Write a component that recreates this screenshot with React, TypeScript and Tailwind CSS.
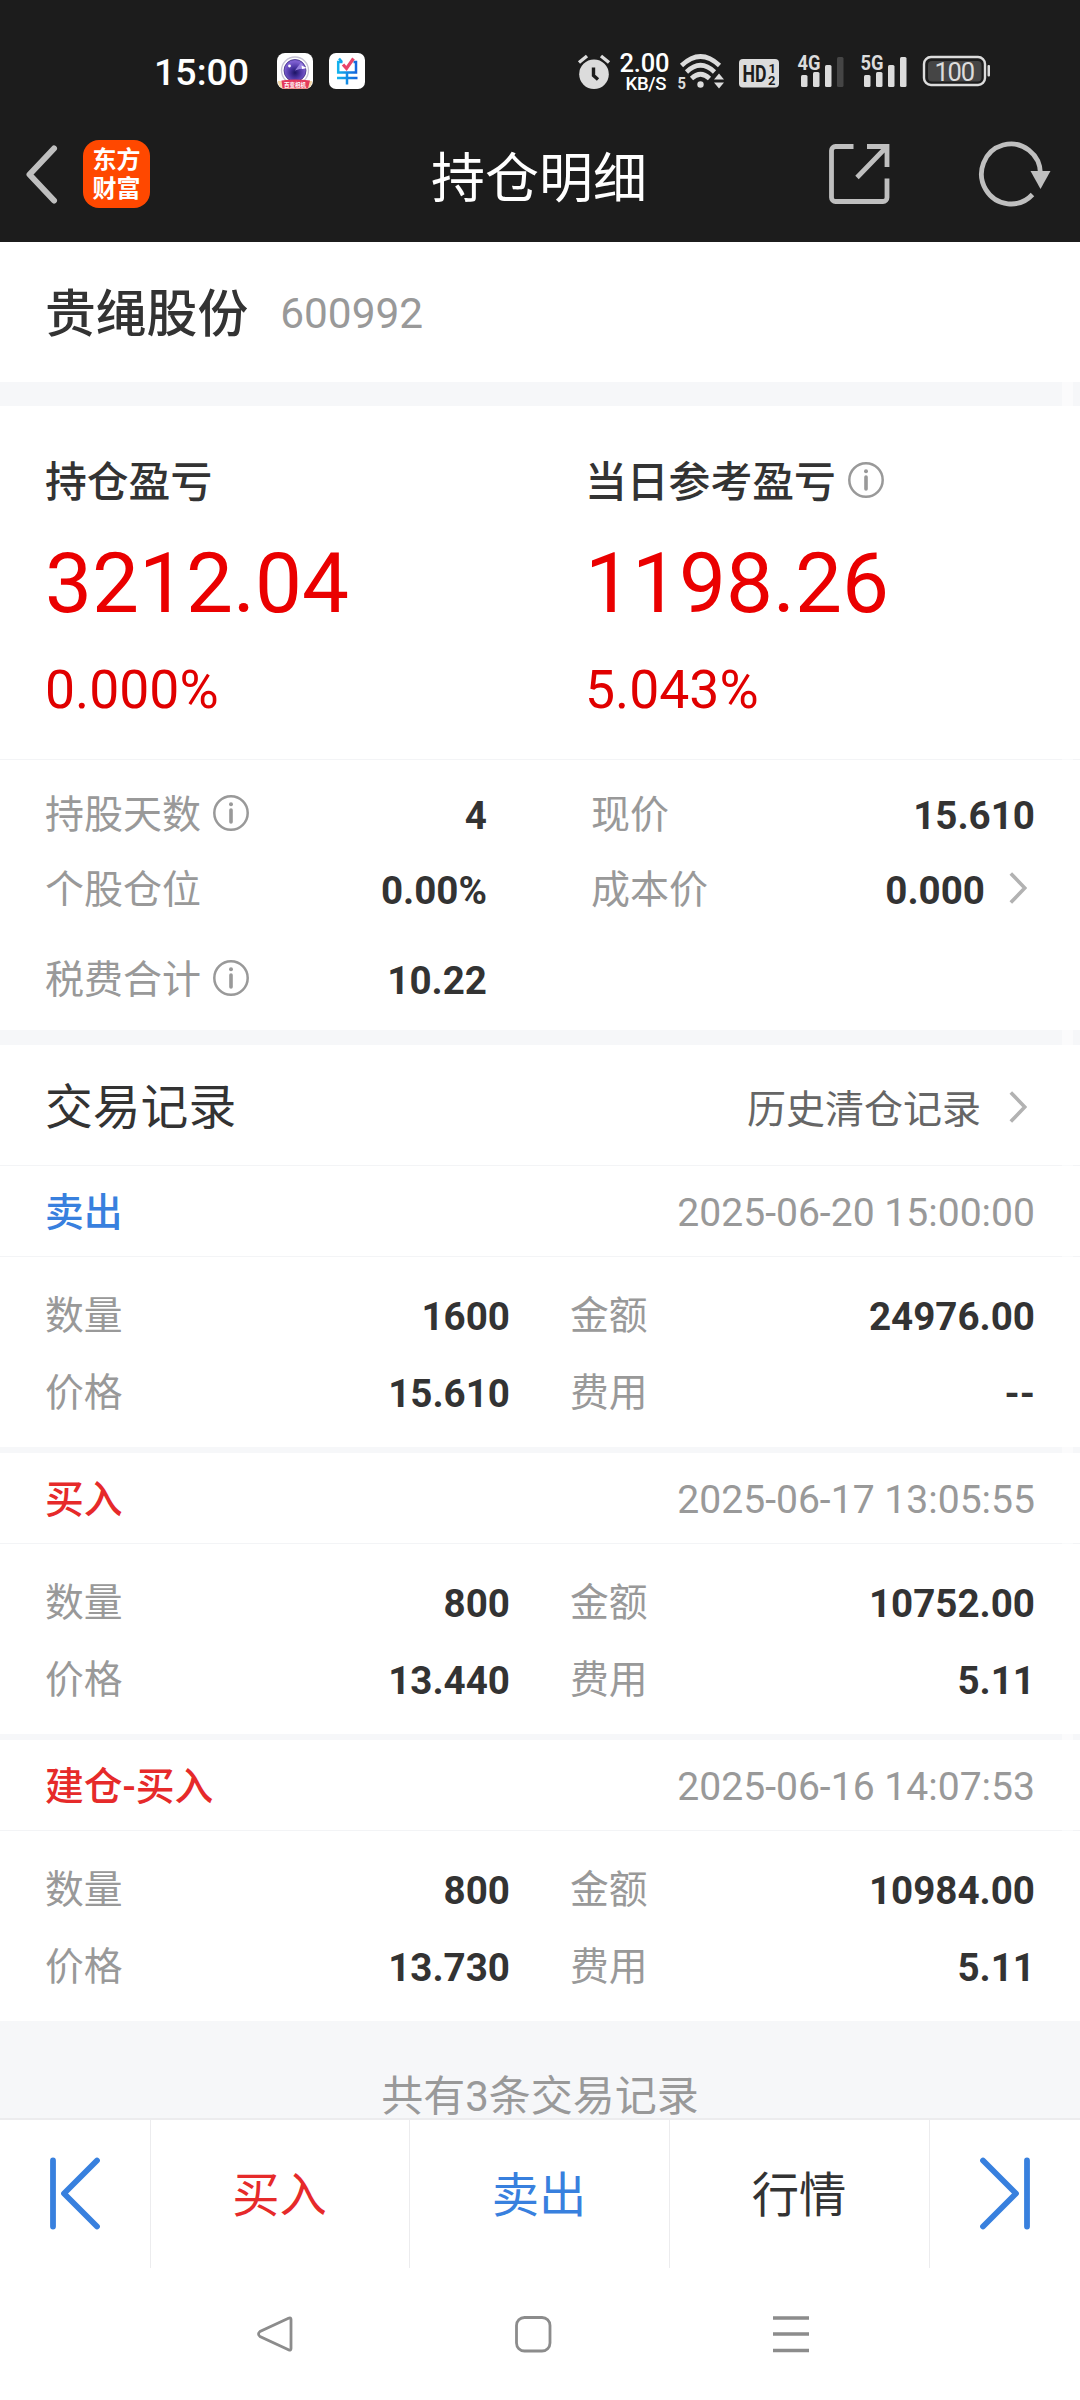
import React from "react";

interface Trade {
  type: string;
  color: string;
  time: string;
  amount: string;
  money: string;
  price: string;
  fee: string;
}

const trades: Trade[] = [
  {
    type: "卖出",
    color: "text-[#3880de]",
    time: "2025-06-20 15:00:00",
    amount: "1600",
    money: "24976.00",
    price: "15.610",
    fee: "--",
  },
  {
    type: "买入",
    color: "text-[#e62a2a]",
    time: "2025-06-17 13:05:55",
    amount: "800",
    money: "10752.00",
    price: "13.440",
    fee: "5.11",
  },
  {
    type: "建仓-买入",
    color: "text-[#e62a2a]",
    time: "2025-06-16 14:07:53",
    amount: "800",
    money: "10984.00",
    price: "13.730",
    fee: "5.11",
  },
];

const InfoIcon = ({ className = "" }: { className?: string }) => (
  <svg viewBox="0 0 36 36" className={`w-9 h-9 shrink-0 ${className}`}>
    <circle cx="18" cy="18" r="16.700" fill="none" stroke="#999" strokeWidth="2.500" />
    <circle cx="18" cy="9.300" r="2" fill="#999" />
    <path d="M18 15v12" stroke="#999" strokeWidth="3.600" strokeLinecap="round" />
  </svg>
);

const Chevron = ({ className = "" }: { className?: string }) => (
  <svg viewBox="0 0 18 32" className={`w-[18px] h-8 shrink-0 ${className}`}>
    <path d="M1.800 1.500 15.800 16 1.800 30.500" fill="none" stroke="#b2b2b2" strokeWidth="3.600" />
  </svg>
);

const CameraApp = () => (
  <svg viewBox="0 0 36 36" className="w-9 h-9">
    <defs>
      <radialGradient id="lens" cx="0.5" cy="0.6" r="0.5">
        <stop offset="0" stopColor="#1b1464" />
        <stop offset="0.5" stopColor="#4b35a3" />
        <stop offset="1" stopColor="#7d5fd0" />
      </radialGradient>
    </defs>
    <rect width="36" height="36" rx="8" fill="#fff" />
    <circle cx="18" cy="17.500" r="13.500" fill="none" stroke="#c5c1d4" strokeWidth="1.300" />
    <circle cx="18" cy="17.500" r="11" fill="url(#lens)" stroke="#3c2c80" strokeWidth="0.800" />
    <path d="M18 17.500 24 9.500a10 10 0 0 1 3.500 6.500l-5 0z" fill="#9a83e0" />
    <path d="M24.500 12.500l5.500 2.500-5 1z" fill="#fff" />
    <circle cx="12.500" cy="13" r="1.400" fill="#fff" />
    <path d="M1 28h34c0 5-3 8-8 8H9c-5 0-8-3-8-8z" fill="#f6d9a8" />
    <path d="M4.500 27.500Q18 25.500 33 27.500L31 35.500H5.500z" fill="#e43a5c" />
    <text
      x="18"
      y="34"
      textAnchor="middle"
      fontSize="5.500"
      fontWeight="700"
      fill="#fff"
      fontFamily="Noto Sans CJK SC, sans-serif"
    >
      百变相机
    </text>
  </svg>
);

const BillApp = () => (
  <svg viewBox="0 0 36 36" className="w-9 h-9 ml-4">
    <defs>
      <linearGradient id="bill" gradientUnits="userSpaceOnUse" x1="8" x2="28" y1="0" y2="0">
        <stop offset="0" stopColor="#12b5ee" />
        <stop offset="1" stopColor="#1463dc" />
      </linearGradient>
    </defs>
    <rect width="36" height="36" rx="7" fill="#fff" />
    <path
      d="M10 5.500 13 9M13.500 9H9.200V19.500H27V9H24.500M8 25H28.500M18 19V31.500"
      fill="none"
      stroke="url(#bill)"
      strokeWidth="2.500"
    />
    <path d="M14 11.500 17.500 15.500 24.500 5.500" fill="none" stroke="#e8446a" strokeWidth="3.200" />
  </svg>
);

// alarm, net speed, wifi, HD, signal bars and battery
const StatusIcons = () => (
  <svg
    viewBox="570 48 430 46"
    className="w-[430px] h-[46px] ml-[205px]"
    fill="#dcdcdc"
    fontFamily="Roboto, sans-serif"
  >
    <circle cx="594" cy="74.200" r="14.800" />
    <path d="M579 62.500 587 56M609 62.500 601 56" stroke="#dcdcdc" strokeWidth="3.400" />
    <path d="M593.500 67.500V75.500L598 79.500" fill="none" stroke="#1c1c1c" strokeWidth="3.400" />

    <text x="619.500" y="72" fontSize="25.500" fontWeight="500" fill="#fff" textLength="50">
      2.00
    </text>
    <text x="625.500" y="89.800" fontSize="18.500" fontWeight="500" fill="#fff" textLength="41">
      KB/S
    </text>

    <g fill="none" stroke="#dcdcdc" strokeWidth="4.600">
      <path d="M681.500 65.500Q700.500 47.500 719.500 65.500" />
      <path d="M686.500 72Q700.500 58.500 714.500 72" />
      <path d="M691.500 78.500Q700.500 70 709.500 78.500" />
    </g>
    <circle cx="700.500" cy="84.500" r="3.200" />
    <text x="677.500" y="88.500" fontSize="17" fontWeight="700" textLength="8.500" lengthAdjust="spacingAndGlyphs">
      5
    </text>
    <path d="M719 73.500 724 79.500H714zM719 88.500 724 82.500H714z" />

    <rect x="739" y="59" width="40" height="28.500" rx="4" />
    <g fill="#1c1c1c" fontWeight="700">
      <text x="742.500" y="81.500" fontSize="23" textLength="24" lengthAdjust="spacingAndGlyphs">
        HD
      </text>
      <text x="768.500" y="72.500" fontSize="13">
        1
      </text>
      <text x="768" y="84.500" fontSize="13">
        2
      </text>
    </g>

    <text x="797.500" y="70" fontSize="21" fontWeight="700" textLength="23" lengthAdjust="spacingAndGlyphs">
      4G
    </text>
    <rect x="801" y="75" width="6.500" height="12" rx="1.500" />
    <rect x="813" y="72" width="6.500" height="15" rx="1.500" />
    <rect x="825" y="65" width="6.500" height="22" rx="1.500" />
    <rect x="837" y="57" width="6.500" height="30" rx="1.500" fill="#454545" />

    <text x="860.500" y="70" fontSize="21" fontWeight="700" textLength="23" lengthAdjust="spacingAndGlyphs">
      5G
    </text>
    <rect x="864" y="75" width="6.500" height="12" rx="1.500" />
    <rect x="876" y="72" width="6.500" height="15" rx="1.500" />
    <rect x="888" y="65" width="6.500" height="22" rx="1.500" />
    <rect x="900" y="57" width="6.500" height="30" rx="1.500" />

    <rect x="924" y="57" width="61" height="28" rx="7" fill="none" stroke="#dcdcdc" strokeWidth="2.400" />
    <rect x="928" y="61" width="53.500" height="20.500" rx="4" fill="#454545" />
    <rect x="987.500" y="65" width="2.500" height="11.500" rx="1" />
    <text x="934.500" y="80.800" fontSize="25.500" textLength="40.500">
      100
    </text>
  </svg>
);

const Header = () => (
  <header className="h-[242px] bg-[#1c1c1c] text-white">
    <div className="h-[100px] pt-12 flex items-start">
      <span className="w-[94px] ml-[154px] pt-px text-[37.500px] leading-[46px] font-medium">
        15:00
      </span>
      <div className="flex ml-[29px] pt-[5px]">
        <CameraApp />
        <BillApp />
      </div>
      <StatusIcons />
    </div>
    <div className="h-[142px] flex items-start">
      <div className="flex-1 flex pt-10 pl-6">
        <svg viewBox="0 0 36 68" className="w-9 h-[68px] -ml-px">
          <path
            d="M31 8.500 6.500 34.500 31 60.500"
            fill="none"
            stroke="#bfbfbf"
            strokeWidth="6"
            strokeLinecap="round"
            strokeLinejoin="round"
          />
        </svg>
        <div className="w-[67px] h-[68px] ml-6 pt-1.5 rounded-2xl bg-[#ff4800] flex flex-col items-center text-2xl leading-[29px] font-bold">
          <span>东方</span>
          <span>财富</span>
        </div>
      </div>
      <h1 className="text-[54px] leading-[72px] mt-[44px]">持仓明细</h1>
      <div className="flex-1 flex justify-end pt-[42px] pr-[26px]">
        <svg viewBox="0 0 62 62" className="w-[62px] h-[62px]" fill="none" stroke="#bfbfbf" strokeWidth="4.800">
          <path d="M25.500 4.500H7.500a4 4 0 0 0-4 4v47a4 4 0 0 0 4 4H55a4 4 0 0 0 4-4V36.500" />
          <path d="M39 4.500H59V25M58.500 5 29 35.500" />
        </svg>
        <svg viewBox="0 0 76 68" className="w-[76px] h-[68px] ml-[88px] -mt-0.5">
          <path
            d="M62.500 34A29.500 30 0 1 0 54.500 54.500"
            fill="none"
            stroke="#bfbfbf"
            strokeWidth="4.800"
          />
          <path d="M52.500 31H72.500L62.500 49z" fill="#bfbfbf" />
        </svg>
      </div>
    </div>
  </header>
);

interface ProfitProps {
  label: string;
  value: string;
  percent: string;
  info?: boolean;
}

const Profit: React.FC<ProfitProps> = ({ label, value, percent, info }) => (
  <div className="w-[540px] shrink-0">
    <div className="h-[62px] pt-0.5 flex items-center text-[41.800px] font-medium text-[#333]">
      {label}
      {info && <InfoIcon className="ml-3 -mt-1.5" />}
    </div>
    <div className="mt-[15px] h-[110px] leading-[110px] text-[83.600px] text-[#ea0000]">{value}</div>
    <div className="mt-[19px] h-[66px] leading-[66px] text-[53.500px] text-[#e00000]">{percent}</div>
  </div>
);

interface CellProps {
  label: string;
  value?: string;
  info?: boolean;
  arrow?: boolean;
}

const Cell: React.FC<CellProps> = ({ label, value, info, arrow }) => (
  <div className="h-[75px] flex items-center">
    <span className="text-[39px] text-[#999]">{label}</span>
    {info && <InfoIcon className="ml-3 -mt-1.5" />}
    <span className="ml-auto text-[38.600px] font-bold text-[#333]">{value}</span>
    {arrow && <Chevron className="ml-6 mr-2 -mt-1.5" />}
  </div>
);

const Pair = ({ label, value }: { label: string; value: string }) => (
  <div className="flex items-center justify-between">
    <span className="text-[38.800px] text-[#999]">{label}</span>
    <span className="text-[38.600px] font-bold text-[#333]">{value}</span>
  </div>
);

const TradeRecord: React.FC<{ trade: Trade }> = ({ trade }) => (
  <div className="bg-white">
    <div className="h-[91px] px-[45px] pt-[5px] flex items-center justify-between border-b border-[#f3f4f6]">
      <span className={`text-[38.800px] font-medium ${trade.color}`}>{trade.type}</span>
      <span className="text-[39.100px] text-[#999]">{trade.time}</span>
    </div>
    <div className="h-[190px] px-[45px] pt-[21px] grid grid-cols-[465px_465px] auto-rows-[77px] gap-x-[60px]">
      <Pair label="数量" value={trade.amount} />
      <Pair label="金额" value={trade.money} />
      <Pair label="价格" value={trade.price} />
      <Pair label="费用" value={trade.fee} />
    </div>
  </div>
);

const BottomTabs = () => (
  <nav className="h-[150px] bg-white border-t-2 border-[#ececee] grid grid-cols-[151px_259px_260px_260px_150px] text-[47.300px] divide-x divide-[#ececee]">
    <button className="flex justify-center pt-9">
      <svg
        viewBox="0 0 52 74"
        className="w-[52px] h-[74px]"
        fill="none"
        stroke="#3880de"
        strokeWidth="5.800"
        strokeLinecap="round"
        strokeLinejoin="round"
      >
        <path d="M4 4.500V70.500M48 4.500 15 37.500 48 70.500" />
      </svg>
    </button>
    <button className="pt-[5px] pr-px text-[#e62a2a]">买入</button>
    <button className="pt-[5px] pr-px text-[#3880de]">卖出</button>
    <button className="pt-[5px] pr-px text-[#333]">行情</button>
    <button className="flex justify-center pt-9">
      <svg
        viewBox="0 0 52 74"
        className="w-[52px] h-[74px]"
        fill="none"
        stroke="#3880de"
        strokeWidth="5.800"
        strokeLinecap="round"
        strokeLinejoin="round"
      >
        <path d="M48 4.500V70.500M4 4.500 37 37.500 4 70.500" />
      </svg>
    </button>
  </nav>
);

const SystemNav = () => (
  <div className="h-[132px] bg-white flex pl-[255px] pt-[46px] gap-[218px]">
    <svg viewBox="0 0 40 40" className="w-10 h-10" fill="none" stroke="#8c8c8c" strokeWidth="2.800">
      <path d="M36 5.500V34.500Q36 37 33.500 35.800L5 22.500Q2 20 5 17.500L33.500 4.200Q36 3 36 5.500z" />
    </svg>
    <svg viewBox="0 0 40 40" className="w-10 h-10" fill="none" stroke="#8c8c8c" strokeWidth="2.800">
      <rect x="3.500" y="3.500" width="33.500" height="33.500" rx="8" />
    </svg>
    <svg viewBox="0 0 40 40" className="w-10 h-10" stroke="#8c8c8c" strokeWidth="3.400">
      <path d="M2 4H38M2 20H38M2 36.500H38" />
    </svg>
  </div>
);

export default function App() {
  return (
    <div className="relative w-[1080px] h-[2400px] overflow-hidden bg-[#f6f7f9] font-[Roboto,'Noto_Sans_CJK_SC',sans-serif]">
      <Header />
      <main className="h-[1876px]">
        <section className="h-[140px] px-[45px] pt-1.5 bg-white flex items-center">
          <h2 className="text-[50.800px] font-medium text-[#333]">贵绳股份</h2>
          <span className="ml-8 -mt-0.5 text-[42.400px] text-[#999]">600992</span>
        </section>

        <section className="mt-6 h-[354px] pt-[45px] pl-[45px] bg-white flex border-b border-[#f3f4f6]">
          <Profit label="持仓盈亏" value="3212.04" percent="0.000%" />
          <Profit label="当日参考盈亏" value="1198.26" percent="5.043%" info />
        </section>
        <section className="h-[270px] px-[45px] pt-[18px] bg-white">
          <div className="grid grid-cols-[442px_444px] gap-x-[104px]">
            <Cell label="持股天数" value="4" info />
            <Cell label="现价" value="15.610" />
            <Cell label="个股仓位" value="0.00%" />
            <Cell label="成本价" value="0.000" arrow />
          </div>
          <div className="w-[442px] mt-[15px]">
            <Cell label="税费合计" value="10.22" info />
          </div>
        </section>

        <section className="mt-[15px]">
          <div className="h-[121px] pl-[45px] pr-[53px] pt-[7px] bg-white flex items-center border-b border-[#f3f4f6]">
            <h3 className="text-[47.800px] text-[#333]">交易记录</h3>
            <span className="ml-auto mt-1 text-[39px] text-[#666]">历史清仓记录</span>
            <Chevron className="ml-7 -mt-1" />
          </div>
          <div className="flex flex-col gap-1.5">
            {trades.map((trade) => (
              <TradeRecord key={trade.time} trade={trade} />
            ))}
          </div>
        </section>

        <p className="pt-[55px] text-center text-[42px] leading-[42px] text-[#999]">
          共有3条交易记录
        </p>
      </main>
      {/* faded scrollbar over the content */}
      <div className="absolute right-[7px] top-[242px] w-[11px] h-[1600px] bg-white/50"></div>
      <BottomTabs />
      <SystemNav />
    </div>
  );
}
